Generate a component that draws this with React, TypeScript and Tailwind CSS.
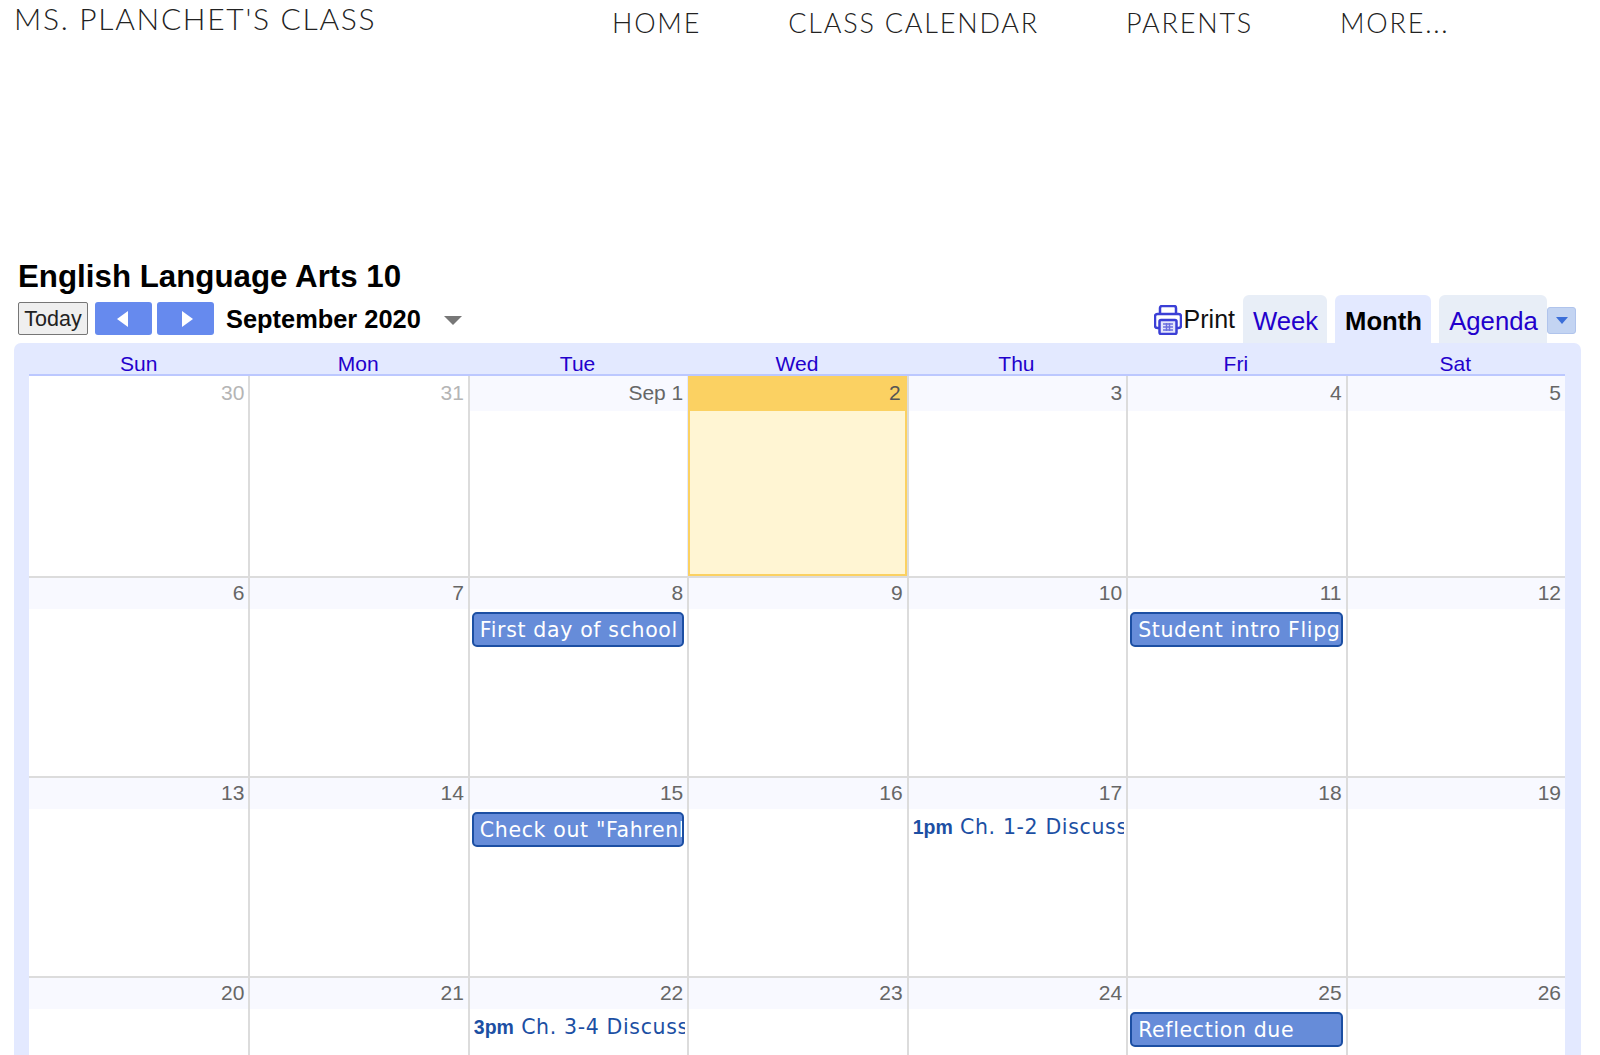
import React from "react";

type CalEvent = { kind: "bar" | "timed"; title: string; time?: string };
type Day = { label: string; muted?: boolean; today?: boolean; event?: CalEvent };

const dayNames = ["Sun", "Mon", "Tue", "Wed", "Thu", "Fri", "Sat"];

const weeks: Day[][] = [
  [
    { label: "30", muted: true },
    { label: "31", muted: true },
    { label: "Sep 1" },
    { label: "2", today: true },
    { label: "3" },
    { label: "4" },
    { label: "5" },
  ],
  [
    { label: "6" },
    { label: "7" },
    { label: "8", event: { kind: "bar", title: "First day of school" } },
    { label: "9" },
    { label: "10" },
    { label: "11", event: { kind: "bar", title: "Student intro Flipgrid" } },
    { label: "12" },
  ],
  [
    { label: "13" },
    { label: "14" },
    { label: "15", event: { kind: "bar", title: 'Check out "Fahrenheit 451"' } },
    { label: "16" },
    { label: "17", event: { kind: "timed", time: "1pm", title: "Ch. 1-2 Discussion" } },
    { label: "18" },
    { label: "19" },
  ],
  [
    { label: "20" },
    { label: "21" },
    { label: "22", event: { kind: "timed", time: "3pm", title: "Ch. 3-4 Discussion" } },
    { label: "23" },
    { label: "24" },
    { label: "25", event: { kind: "bar", title: "Reflection due" } },
    { label: "26" },
  ],
];

const PrintIcon = () => (
  <svg width="28" height="30" viewBox="0 0 28 30" fill="none" stroke="#3b3fd6" strokeWidth="2.500">
    <path d="M6 9V3a2 2 0 0 1 2-2h12a2 2 0 0 1 2 2v6" />
    <path d="M5 23H3.500A2.500 2.500 0 0 1 1 20.500v-9A2.500 2.500 0 0 1 3.500 9h21a2.500 2.500 0 0 1 2.500 2.500v9a2.500 2.500 0 0 1-2.500 2.500H23" />
    <rect x="5.500" y="15" width="17" height="14" rx="1.500" fill="#e3e5fb" />
    <path d="M9 19h10M9 22h10M9 25h10M12.500 18v8M15.500 18v8" strokeWidth="1.500" stroke="#6c70e0" />
  </svg>
);

const DayCell = ({ day, tall, index }: { day: Day; tall: boolean; index: number }) => {
  const strip = day.today ? "bg-[#fbd162]" : day.muted ? "bg-white" : "bg-[#f8f9ff]";
  const num = day.muted ? "text-[#b5b5b5]" : day.today ? "text-[#555555]" : "text-[#666666]";
  return (
    <div
      className={`relative min-w-0 overflow-hidden ${index > 0 && !day.today ? "border-l-2 border-[#dcdcdc]" : ""} ${
        day.today ? "z-10 ml-[1px] bg-[#fff5d3] border-x-2 border-b-2 border-[#fbd162]" : "bg-white"
      }`}
    >
      <div className={`${tall ? "h-[35px] pt-[3px]" : "h-[31px] pt-[1px]"} ${strip} ${num} ${day.today ? "pr-[4px]" : "pr-[4px]"} text-right text-[21px] leading-[27px]`}>
        {day.label}
      </div>
      {day.event?.kind === "bar" && (
        <div className="mt-[3px] ml-[2px] mr-[3px] h-[35px] overflow-hidden whitespace-nowrap rounded-[5px] border-2 border-[#1c4fa3] bg-[#668cd9] pl-[6px] font-['DejaVu_Sans'] text-[20.500px] leading-[33px] tracking-[0.640px] text-white">
          {day.event.title}
        </div>
      )}
      {day.event?.kind === "timed" && (
        <div className="mt-[2px] ml-[4px] mr-[2px] overflow-hidden whitespace-nowrap font-['DejaVu_Sans'] text-[20.500px] leading-[32px] tracking-[0.640px] text-[#1c4fa3]">
          <span className="font-['Liberation_Sans'] text-[19.500px] font-bold tracking-normal">{day.event.time}</span> {day.event.title}
        </div>
      )}
    </div>
  );
};

export default function App() {
  return (
    <div className="h-[1055px] overflow-hidden bg-white font-['Liberation_Sans',Arial,sans-serif]">
      <header className="flex h-[262px] items-start font-['Lato',sans-serif] font-light text-[#222222]">
        <div className="ml-[14px] w-[598px] text-[30px] leading-[36px] tracking-[1.700px]">MS. PLANCHET'S CLASS</div>
        <nav className="mt-[5px] flex gap-[87px] text-[27px] leading-[36px] tracking-[1.800px]">
          <span>HOME</span>
          <span>CLASS CALENDAR</span>
          <span>PARENTS</span>
          <span>MORE...</span>
        </nav>
      </header>

      <h1 className="ml-[18px] h-[38px] text-[31.300px] font-bold leading-[30px] text-black">English Language Arts 10</h1>

      <div className="flex h-[43px] items-start pl-[18px]">
        <button className="mt-[2px] h-[33px] w-[70px] rounded-[2px] border border-[#767676] bg-[#efefef] text-center text-[21.500px] leading-[28px] text-[#222222]">
          Today
        </button>
        <button className="ml-[7px] mt-[2px] flex h-[33px] w-[57px] items-center justify-center rounded-[3px] bg-[#668aee] pr-[2px]">
          <span className="h-0 w-0 border-y-[8px] border-r-[11px] border-y-transparent border-r-white" />
        </button>
        <button className="ml-[5px] mt-[2px] flex h-[33px] w-[57px] items-center justify-center rounded-[3px] bg-[#668aee] pl-[3px]">
          <span className="h-0 w-0 border-y-[8px] border-l-[11px] border-y-transparent border-l-white" />
        </button>
        <span className="ml-[12px] mt-[2px] text-[25.400px] font-bold leading-[35px] text-black">September 2020</span>
        <span className="ml-[23px] mt-[16px] h-0 w-0 border-x-[9px] border-t-[9px] border-x-transparent border-t-[#777777]" />
        <div className="ml-auto flex items-end self-stretch pr-[24px]">
          <div className="mb-[8px] mr-[8px] flex items-start">
            <PrintIcon />
            <span className="mt-[1px] ml-[2px] text-[25px] leading-[26px] text-[#111111]">Print</span>
          </div>
          <div className="flex h-[48px] w-[84px] items-center justify-center rounded-t-[6px] bg-[#e8eef7] pl-[1px] pt-[5px] text-[25.700px] text-[#2200cc]">Week</div>
          <div className="ml-[8px] flex h-[48px] w-[96px] items-center justify-center rounded-t-[6px] bg-[#e3e9ff] pl-[1px] pt-[5px] text-[25.700px] font-bold text-black">Month</div>
          <div className="ml-[8px] flex h-[48px] w-[108px] items-center justify-center rounded-t-[6px] bg-[#e8eef7] pl-[1px] pt-[5px] text-[25.700px] text-[#2200cc]">Agenda</div>
          <div className="mb-[9px] flex h-[27px] w-[29px] items-center justify-center rounded-[3px] border border-[#b0c4ec] bg-[#c3d4f2]">
            <span className="h-0 w-0 border-x-[6px] border-t-[7px] border-x-transparent border-t-[#3b6ed8]" />
          </div>
        </div>
      </div>

      <section className="ml-[14px] mr-[19px] h-[800px] rounded-t-[7px] bg-[#e3e9ff] pl-[15px] pr-[16px]">
        <div className="grid h-[33px] grid-cols-7 border-b-2 border-[#bcc8ff]">
          {dayNames.map((name) => (
            <div key={name} className="pt-[8px] text-center text-[21px] leading-[26px] text-[#2200cc]">
              {name}
            </div>
          ))}
        </div>
        {weeks.map((week, w) => (
          <div key={w} className={`grid grid-cols-7 ${w === 0 ? "h-[200px]" : "h-[200px] border-t-2 border-[#dcdcdc]"}`}>
            {week.map((day, i) => (
              <DayCell key={day.label} day={day} tall={w === 0} index={i} />
            ))}
          </div>
        ))}
      </section>
    </div>
  );
}
